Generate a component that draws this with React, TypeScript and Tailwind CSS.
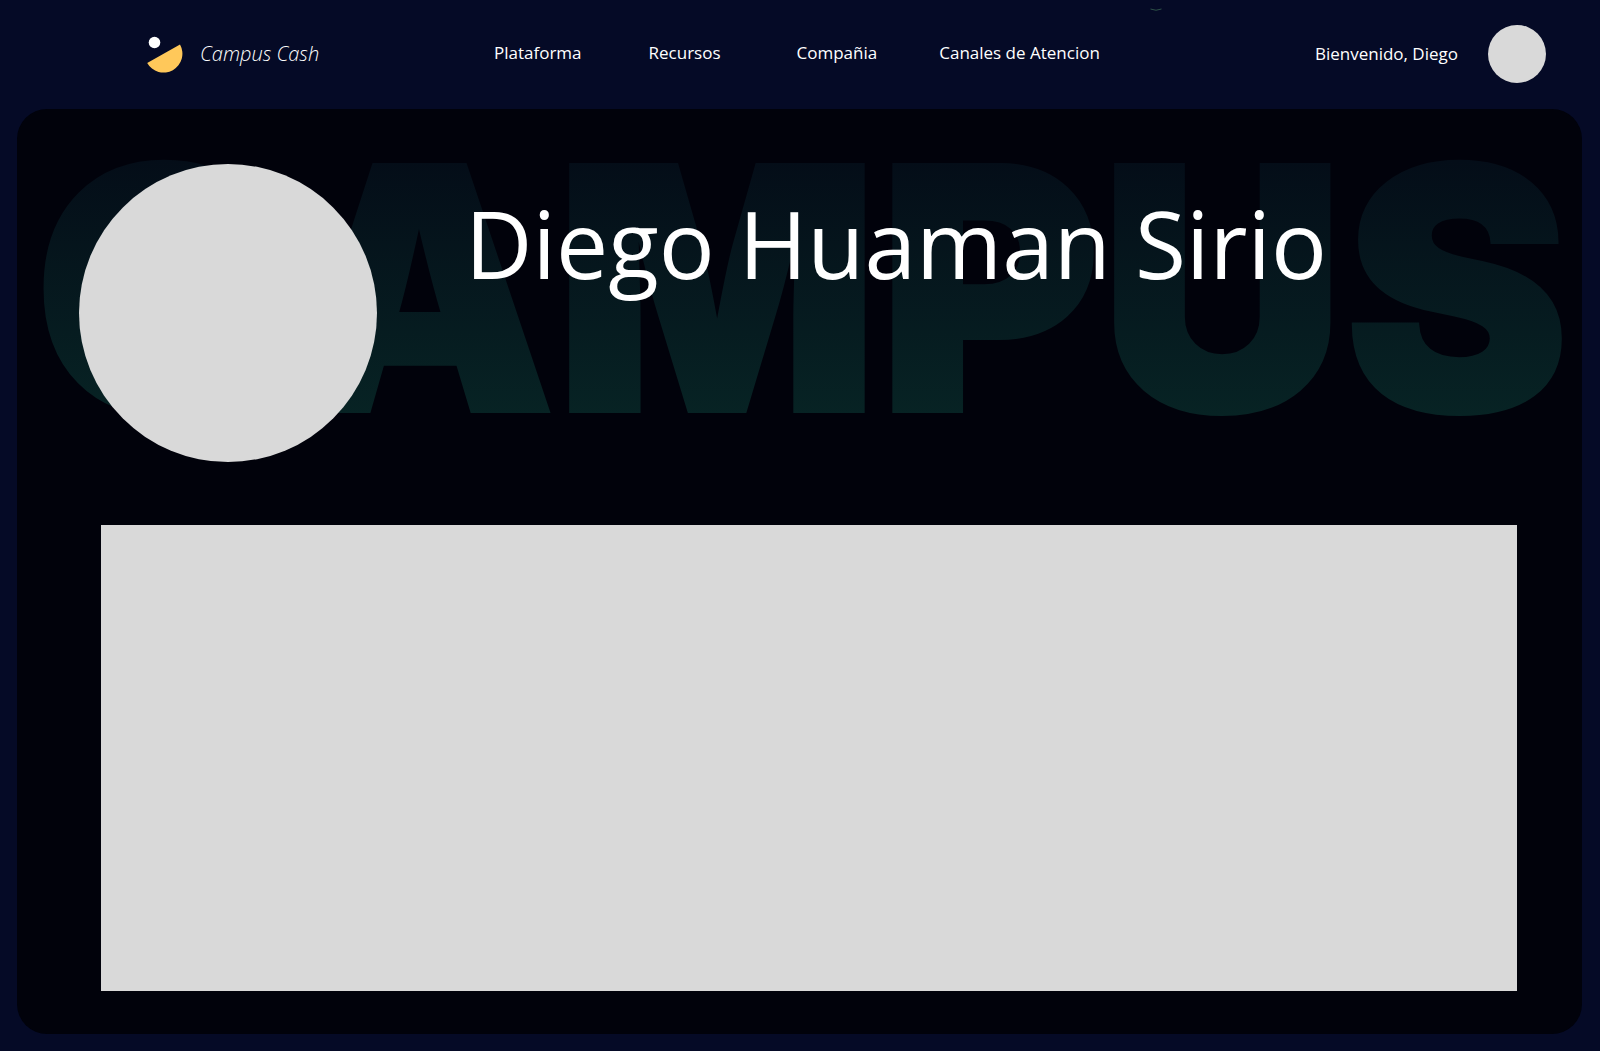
const links = ["Plataforma", "Recursos", "Compañia", "Canales de Atencion"];
const gaps = ["", "ml-[67px]", "ml-[76px]", "ml-[62px]"];

function Logo() {
  return (
    <svg viewBox="0 0 38 38" className="h-[38px] w-[38px]" aria-hidden="true">
      <circle cx="8.500" cy="7.500" r="5.800" fill="#fff" />
      <path d="M1.200 28 L34 9.500 A18.300 18.300 0 0 1 1.200 28Z" fill="#ffc85a" />
    </svg>
  );
}

export default function App() {
  return (
    <div className="relative flex min-h-screen flex-col bg-[#050a26] pr-[18px] pb-[17px] pl-[17px] font-['Open_Sans',sans-serif] text-white">
      <svg viewBox="0 0 12 3" className="absolute top-[8px] left-[1150px] h-[3px] w-[12px]" aria-hidden="true">
        <path d="M0.500 1 Q6 3.500 11.500 1" fill="none" stroke="#2f5148" />
      </svg>
      <header className="mb-[2px] flex h-[107px] items-center pr-9 pl-[129px]">
        <a href="#" className="flex items-center gap-4">
          <Logo />
          <span className="w-[294px] text-xl font-light italic">Campus Cash</span>
        </a>
        <nav className="flex items-center pb-[2px] text-[17px]">
          {links.map((l, i) => (
            <a key={l} href="#" className={gaps[i]}>{l}</a>
          ))}
        </nav>
        <div className="ml-auto flex items-center gap-[30px] text-[17px]">
          <span>Bienvenido, Diego</span>
          <button aria-label="Perfil" className="h-[58px] w-[58px] rounded-full bg-[#d9d9d9]" />
        </div>
      </header>
      <main className="relative flex flex-1 flex-col rounded-[30px] bg-[#01020b] pt-[55px] pr-[65px] pb-[43px] pl-[62px]">
        <svg viewBox="0 0 1565 300" className="absolute top-[30px] left-0 w-full overflow-visible" aria-hidden="true">
          <defs>
            <linearGradient id="fade" gradientUnits="userSpaceOnUse" x1="0" y1="22" x2="0" y2="276">
              <stop offset="0" stopColor="#040d18" />
              <stop offset="1" stopColor="#072324" />
            </linearGradient>
          </defs>
          <text x="17" y="272" fontSize="338" fontWeight="900" fontFamily="Inter" className="[font-kerning:none]" fill="url(#fade)" stroke="url(#fade)" strokeWidth="4">CAMPUS</text>
        </svg>
        <section className="relative flex gap-[88px]">
          <div className="h-[298px] w-[298px] shrink-0 rounded-full bg-[#d9d9d9]" />
          <h1 className="mt-[14px] text-[93px] leading-[130px]">Diego Huaman Sirio</h1>
        </section>
        <section className="mt-[63px] ml-[22px] flex-1 bg-[#d9d9d9]" />
      </main>
    </div>
  );
}
